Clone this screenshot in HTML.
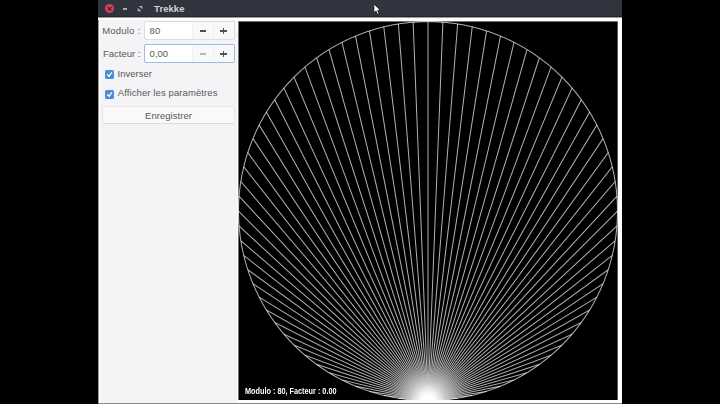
<!DOCTYPE html>
<html><head><meta charset="utf-8">
<style>
*{box-sizing:border-box;margin:0;padding:0}
html,body{width:720px;height:404px;background:#000;overflow:hidden;font-family:"Liberation Sans",sans-serif}
.a{position:absolute}
.t{position:absolute;line-height:1;white-space:nowrap}
#win{left:98px;top:0;width:524px;height:404px;background:#f4f4f6}
#title{left:98px;top:0;width:524px;height:17px;background:#30343e;border-bottom:1px solid #23262d}
#close{left:105px;top:4.2px;width:9.3px;height:9.3px;border-radius:50%;background:#d8405a}
#ttl{left:154.1px;top:4.4px;font-size:9.5px;font-weight:bold;color:#d2d2d2;letter-spacing:0.05px}
.lbl{font-size:9.5px;color:#585858}
.spin{left:144px;width:90.5px;height:19px;background:#fff;border:1px solid #dedee2;border-radius:2px}
.spin.f{border-color:#9dbbe0}
.btn{top:0;height:17px;width:21px;background:#f8f8f9}
.cb{left:104.6px;width:9px;height:9px;background:#4a8fd8;border-radius:1.5px}
#btn{left:102px;top:105.5px;width:132.5px;height:18px;background:#f9f9fa;border:1px solid #e6e6ea;border-bottom-color:#dcdce0;border-radius:2px}
#cv{left:238px;top:21px;width:380px;height:379px;background:#000;overflow:hidden}
#info{left:244.8px;top:386.7px;font-size:9px;color:#fff;font-weight:bold;transform:scaleX(0.81);transform-origin:0 0}
</style></head><body>
<div class="a" id="win"></div>
<div class="a" style="left:98px;top:17px;width:1px;height:387px;background:#9a9a9a"></div>
<div class="a" style="left:99px;top:17px;width:1px;height:387px;background:#fff"></div>
<div class="a" style="left:237px;top:18px;width:385px;height:385px;background:#fff"></div>
<div class="a" style="left:98px;top:17px;width:524px;height:1px;background:#9a9ca0"></div>
<div class="a" style="left:98px;top:18px;width:524px;height:1.5px;background:#fff"></div>
<div class="a" style="left:98px;top:403px;width:524px;height:1px;background:#8a8a8a"></div>
<div class="a" id="title"></div>
<div class="a" id="close"></div>
<svg class="a" style="left:105px;top:4px" width="9" height="9"><path d="M2.9 3L6.5 6.6M6.5 3L2.9 6.6" stroke="#3a2630" stroke-width="1.1"/></svg>
<div class="a" style="left:122.5px;top:8px;width:4.5px;height:1.6px;background:#a8aab0"></div>
<svg class="a" style="left:137px;top:5px" width="7" height="8"><path d="M2 0.9H5.3V4.2Z M0.7 2.7V6.2H4.2Z" fill="#b4b6bb"/></svg>
<div class="t" id="ttl">Trekke</div>
<svg class="a" style="left:373px;top:2.6px" width="10" height="14"><path d="M0.9 0.9V9.9L3 8L4.6 11.6L6.1 11L4.7 7.4H7.6Z" fill="#fff" stroke="#111" stroke-width="0.8" stroke-linejoin="round"/></svg>

<div class="t lbl" style="left:102.2px;top:26px;letter-spacing:0.2px">Modulo :</div>
<div class="a spin" style="top:21px"></div>
<div class="a btn" style="left:192px;top:22px;width:41.5px;height:17px"></div>
<div class="t lbl" style="left:149.6px;top:26px">80</div>
<div class="a" style="left:192px;top:22px;width:0.6px;height:17px;background:#f1f1f3"></div>
<div class="a" style="left:213px;top:22px;width:0.6px;height:17px;background:#f1f1f3"></div>
<div class="a" style="left:199.5px;top:30.4px;width:6.5px;height:1.2px;background:#505050"></div>
<div class="a" style="left:220.3px;top:30.4px;width:6.5px;height:1.2px;background:#505050"></div>
<div class="a" style="left:222.95px;top:27.7px;width:1.2px;height:6.6px;background:#505050"></div>

<div class="t lbl" style="left:103px;top:48.5px">Facteur :</div>
<div class="a spin f" style="top:44px"></div>
<div class="a btn" style="left:192px;top:45px;width:41.5px;height:17px"></div>
<div class="t lbl" style="left:149.6px;top:48.7px">0,00</div>
<div class="a" style="left:192px;top:45px;width:0.6px;height:17px;background:#f1f1f3"></div>
<div class="a" style="left:213px;top:45px;width:0.6px;height:17px;background:#f1f1f3"></div>
<div class="a" style="left:199.5px;top:53.3px;width:6.5px;height:1.3px;background:#b8b8b8"></div>
<div class="a" style="left:220.3px;top:53.4px;width:6.5px;height:1.2px;background:#505050"></div>
<div class="a" style="left:222.95px;top:50.7px;width:1.2px;height:6.6px;background:#505050"></div>

<div class="a cb" style="top:70px"></div>
<svg class="a" style="left:104.6px;top:70px" width="9" height="9"><path d="M2.1 4.5L4.1 6.3L6.9 2.3" stroke="#fff" stroke-width="1.25" fill="none"/></svg>
<div class="t lbl" style="left:117.6px;top:69px">Inverser</div>
<div class="a cb" style="top:89.6px"></div>
<svg class="a" style="left:104.6px;top:89.6px" width="9" height="9"><path d="M2.1 4.5L4.1 6.3L6.9 2.3" stroke="#fff" stroke-width="1.25" fill="none"/></svg>
<div class="t lbl" style="left:117.8px;top:88px;letter-spacing:0.1px">Afficher les paramètres</div>

<div class="a" id="btn"></div>
<div class="t lbl" style="left:145px;top:110.6px;letter-spacing:0.05px">Enregistrer</div>

<div class="a" id="cv">
  <svg width="380" height="379" style="position:absolute;left:0;top:0">
    <defs><radialGradient id="gl" cx="0.5" cy="0.5" r="0.5"><stop offset="0" stop-color="#fff" stop-opacity="1"/><stop offset="0.5" stop-color="#fff" stop-opacity="0.9"/><stop offset="1" stop-color="#fff" stop-opacity="0"/></radialGradient><radialGradient id="gl2" cx="0.5" cy="0.5" r="0.5"><stop offset="0" stop-color="#fff" stop-opacity="0.55"/><stop offset="1" stop-color="#fff" stop-opacity="0"/></radialGradient></defs>
    <g stroke="#fff" stroke-opacity="0.7" stroke-width="1" fill="none">
    <circle cx="190.0" cy="190.1" r="189.5"/>
    <path d="M190.00 379.60L175.13 379.02"/><path d="M190.00 379.60L160.36 377.27"/><path d="M190.00 379.60L145.76 374.36"/><path d="M190.00 379.60L131.44 370.33"/><path d="M190.00 379.60L117.48 365.18"/><path d="M190.00 379.60L103.97 358.95"/><path d="M190.00 379.60L90.99 351.68"/><path d="M190.00 379.60L78.61 343.41"/><path d="M190.00 379.60L66.93 334.20"/><path d="M190.00 379.60L56.00 324.10"/><path d="M190.00 379.60L45.90 313.17"/><path d="M190.00 379.60L36.69 301.49"/><path d="M190.00 379.60L28.42 289.11"/><path d="M190.00 379.60L21.15 276.13"/><path d="M190.00 379.60L14.92 262.62"/><path d="M190.00 379.60L9.77 248.66"/><path d="M190.00 379.60L5.74 234.34"/><path d="M190.00 379.60L2.83 219.74"/><path d="M190.00 379.60L1.08 204.97"/><path d="M190.00 379.60L0.50 190.10"/><path d="M190.00 379.60L1.08 175.23"/><path d="M190.00 379.60L2.83 160.46"/><path d="M190.00 379.60L5.74 145.86"/><path d="M190.00 379.60L9.77 131.54"/><path d="M190.00 379.60L14.92 117.58"/><path d="M190.00 379.60L21.15 104.07"/><path d="M190.00 379.60L28.42 91.09"/><path d="M190.00 379.60L36.69 78.71"/><path d="M190.00 379.60L45.90 67.03"/><path d="M190.00 379.60L56.00 56.10"/><path d="M190.00 379.60L66.93 46.00"/><path d="M190.00 379.60L78.61 36.79"/><path d="M190.00 379.60L90.99 28.52"/><path d="M190.00 379.60L103.97 21.25"/><path d="M190.00 379.60L117.48 15.02"/><path d="M190.00 379.60L131.44 9.87"/><path d="M190.00 379.60L145.76 5.84"/><path d="M190.00 379.60L160.36 2.93"/><path d="M190.00 379.60L175.13 1.18"/><path d="M190.00 379.60L190.00 0.60"/><path d="M190.00 379.60L204.87 1.18"/><path d="M190.00 379.60L219.64 2.93"/><path d="M190.00 379.60L234.24 5.84"/><path d="M190.00 379.60L248.56 9.87"/><path d="M190.00 379.60L262.52 15.02"/><path d="M190.00 379.60L276.03 21.25"/><path d="M190.00 379.60L289.01 28.52"/><path d="M190.00 379.60L301.39 36.79"/><path d="M190.00 379.60L313.07 46.00"/><path d="M190.00 379.60L324.00 56.10"/><path d="M190.00 379.60L334.10 67.03"/><path d="M190.00 379.60L343.31 78.71"/><path d="M190.00 379.60L351.58 91.09"/><path d="M190.00 379.60L358.85 104.07"/><path d="M190.00 379.60L365.08 117.58"/><path d="M190.00 379.60L370.23 131.54"/><path d="M190.00 379.60L374.26 145.86"/><path d="M190.00 379.60L377.17 160.46"/><path d="M190.00 379.60L378.92 175.23"/><path d="M190.00 379.60L379.50 190.10"/><path d="M190.00 379.60L378.92 204.97"/><path d="M190.00 379.60L377.17 219.74"/><path d="M190.00 379.60L374.26 234.34"/><path d="M190.00 379.60L370.23 248.66"/><path d="M190.00 379.60L365.08 262.62"/><path d="M190.00 379.60L358.85 276.13"/><path d="M190.00 379.60L351.58 289.11"/><path d="M190.00 379.60L343.31 301.49"/><path d="M190.00 379.60L334.10 313.17"/><path d="M190.00 379.60L324.00 324.10"/><path d="M190.00 379.60L313.07 334.20"/><path d="M190.00 379.60L301.39 343.41"/><path d="M190.00 379.60L289.01 351.68"/><path d="M190.00 379.60L276.03 358.95"/><path d="M190.00 379.60L262.52 365.18"/><path d="M190.00 379.60L248.56 370.33"/><path d="M190.00 379.60L234.24 374.36"/><path d="M190.00 379.60L219.64 377.27"/><path d="M190.00 379.60L204.87 379.02"/>
    </g>
    <ellipse cx="190.0" cy="375" rx="40" ry="38" fill="url(#gl2)"/><ellipse cx="190.0" cy="378" rx="20" ry="18" fill="url(#gl)"/>
  </svg>
  <canvas id="cc" width="380" height="379" style="position:absolute;left:0;top:0"></canvas>
</div>
<div class="a" style="left:238px;top:21px;width:1px;height:379px;background:rgba(255,255,255,0.45)"></div>
<div class="a" style="left:239px;top:21px;width:379px;height:1px;background:rgba(255,255,255,0.45)"></div>
<div class="a" style="left:617px;top:22px;width:1px;height:378px;background:rgba(255,255,255,0.35)"></div>
<div class="t" id="info">Modulo : 80, Facteur : 0.00</div>
<script>
(function(){
var c=document.getElementById('cc');if(!c||!c.getContext)return;
var S=2,W=380,H=379,cx=190.0,cy=190.1,r=189.5,N=80,LW=1.0,COL='rgba(255,255,255,0.7)';
var o=document.createElement('canvas');o.width=W*S;o.height=H*S;
var g=o.getContext('2d');g.fillStyle='#000';g.fillRect(0,0,W*S,H*S);
g.strokeStyle=COL;g.lineWidth=LW*S;
g.beginPath();g.arc(cx*S,cy*S,r*S,0,Math.PI*2);g.stroke();
var x0=cx*S,y0=(cy+r)*S;
for(var i=1;i<N;i++){var a=2*Math.PI*i/N;g.beginPath();g.moveTo(x0,y0);g.lineTo((cx-r*Math.sin(a))*S,(cy+r*Math.cos(a))*S);g.stroke();}
var x=c.getContext('2d');x.imageSmoothingEnabled=true;x.imageSmoothingQuality='high';x.drawImage(o,0,0,W,H);
})();
</script>
</body></html>
